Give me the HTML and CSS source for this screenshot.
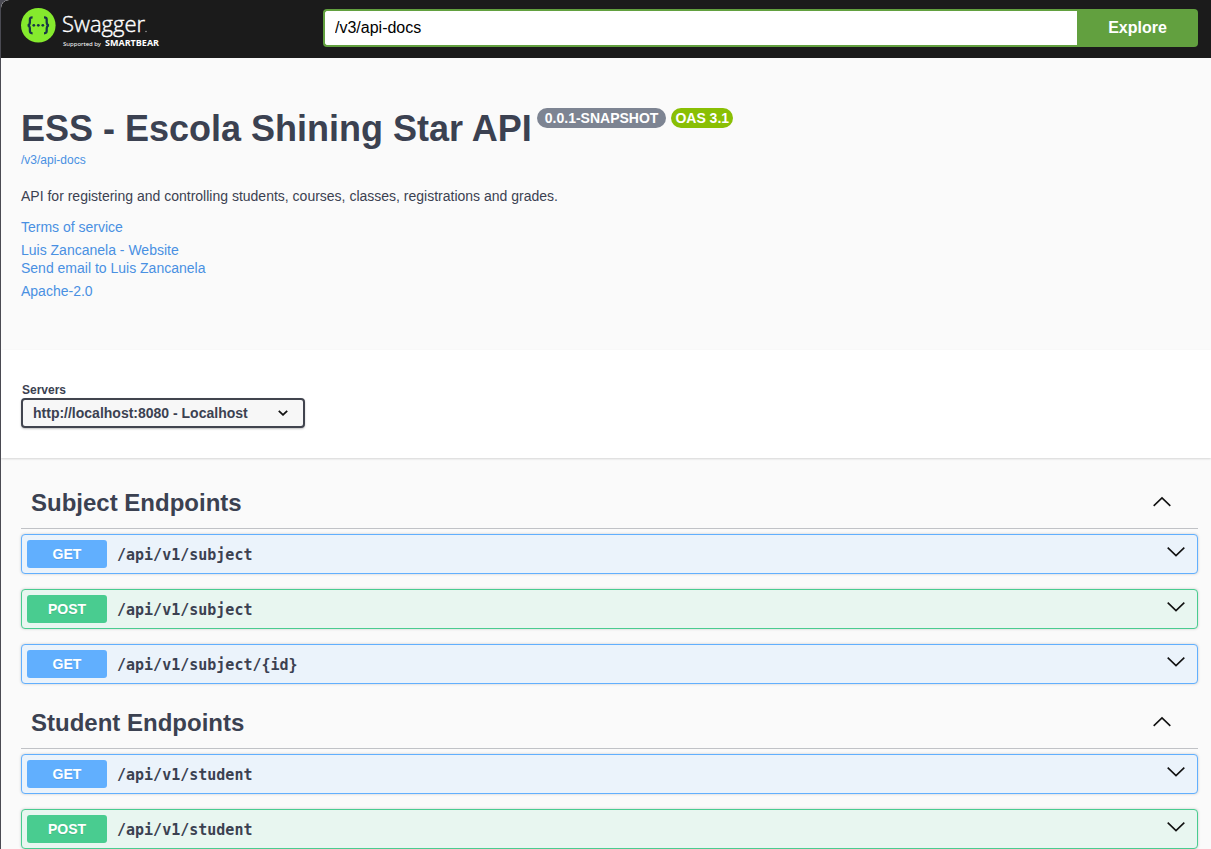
FILE: index.html
```html
<!DOCTYPE html>
<html lang="en">
<head>
<meta charset="utf-8">
<title>Swagger UI</title>
<link rel="stylesheet" href="styles.css">
</head>
<body>
<svg class="sprite" aria-hidden="true">
  <symbol id="up" viewBox="0 0 20 20"><path d="M1.7 12.8 10 4.800l8.3 8"/></symbol>
  <symbol id="down" viewBox="0 0 20 20"><path d="M1.7 3.600 10 11.600l8.3-8"/></symbol>
</svg>
<header class="topbar">
  <a class="logo" href="#" aria-label="Swagger">
    <svg width="144" height="42" viewBox="0 0 144 42">
      <circle cx="17.3" cy="17.3" r="17.3" fill="#85ea2d"/>
      <g fill="none" stroke="#173647" stroke-width="2.300">
        <path d="M11.6 9.3c-2.3 0-2.8.9-2.7 3 .2 2.8-.1 4.7-2.2 5 2.1.3 2.4 2.2 2.2 5-.1 2.1.4 3 2.7 3"/>
        <path d="M23 9.3c2.3 0 2.8.9 2.7 3-.2 2.8.1 4.7 2.2 5-2.1.3-2.4 2.2-2.2 5 .1 2.1-.4 3-2.7 3"/>
      </g>
      <g fill="#173647"><circle cx="12.800" cy="17.3" r="1.400"/><circle cx="17.3" cy="17.3" r="1.400"/><circle cx="21.800" cy="17.3" r="1.400"/></g>
      <text class="logo-name" x="41" y="24">Swagger</text>
      <circle cx="125" cy="23.500" r=".8" fill="#999"/>
      <text class="logo-by" x="42" y="38">Supported by</text>
      <text class="logo-owner" x="84" y="38">SMARTBEAR</text>
    </svg>
  </a>
  <form class="download">
    <input class="download-url" type="text" value="/v3/api-docs" aria-label="API definition URL">
    <button class="download-button" type="button">Explore</button>
  </form>
</header>
<main>
  <section class="info">
    <div class="title-row">
      <h1 class="title">ESS - Escola Shining Star API</h1>
      <span class="badge badge-version">0.0.1-SNAPSHOT</span>
      <span class="badge badge-oas">OAS 3.1</span>
    </div>
    <a class="docs-link" href="#">/v3/api-docs</a>
    <p class="description">API for registering and controlling students, courses, classes, registrations and grades.</p>
    <div class="links">
      <a href="#">Terms of service</a>
      <div class="contact">
        <a href="#">Luis Zancanela - Website</a>
        <a href="#">Send email to Luis Zancanela</a>
      </div>
      <a href="#">Apache-2.0</a>
    </div>
  </section>
  <section class="servers">
    <label class="servers-label" for="servers">Servers</label>
    <div class="select-wrap">
      <select class="servers-select" id="servers"><option>http://localhost:8080 - Localhost</option></select>
      <svg class="select-arrow" width="10" height="6" viewBox="0 0 10 6"><path d="M.8.8 5 4.8 9.200.8"/></svg>
    </div>
  </section>
  <div class="tags">
    <section>
      <h2 class="tag"><span>Subject Endpoints</span>
        <button class="tag-toggle" type="button" aria-label="Collapse Subject Endpoints"><svg class="chevron"><use href="#up"/></svg></button></h2>
      <div class="operations">
        <button class="operation get" type="button"><span class="method">GET</span><span class="path">/api/v1/subject</span><svg class="chevron"><use href="#down"/></svg></button>
        <button class="operation post" type="button"><span class="method">POST</span><span class="path">/api/v1/subject</span><svg class="chevron"><use href="#down"/></svg></button>
        <button class="operation get" type="button"><span class="method">GET</span><span class="path">/api/v1/subject/{id}</span><svg class="chevron"><use href="#down"/></svg></button>
      </div>
    </section>
    <section>
      <h2 class="tag"><span>Student Endpoints</span>
        <button class="tag-toggle" type="button" aria-label="Collapse Student Endpoints"><svg class="chevron"><use href="#up"/></svg></button></h2>
      <div class="operations">
        <button class="operation get" type="button"><span class="method">GET</span><span class="path">/api/v1/student</span><svg class="chevron"><use href="#down"/></svg></button>
        <button class="operation post" type="button"><span class="method">POST</span><span class="path">/api/v1/student</span><svg class="chevron"><use href="#down"/></svg></button>
      </div>
    </section>
  </div>
</main>
</body>
</html>
```
FILE: styles.css
```css
* { box-sizing: border-box; }

html { background: #4a4a52; }

body {
  margin: 0 0 0 1px;
  background: #fafafa;
  color: #3b4151;
  font-family: "Liberation Sans", Arial, sans-serif;
  font-size: 14px;
  line-height: 16px;
  border-top-left-radius: 8px;
}

button, input, select { font: inherit; color: inherit; margin: 0; }
button { cursor: pointer; }
a { color: #4990e2; text-decoration: none; }

.sprite { display: none; }

.topbar {
  display: flex;
  align-items: flex-start;
  gap: 158px;
  padding: 8px 13px 8px 20px;
  background: #1b1b1b;
  border-top-left-radius: 8px;
}
.logo { flex: none; height: 42px; }
.logo svg { display: block; }
.logo-name { font: 300 22px "Open Sans", "Noto Sans", sans-serif; fill: #fff; stroke: #fff; stroke-width: .4px; }
.logo-by { font: 6px "Noto Sans", sans-serif; fill: #fff; }
.logo-owner { font: 700 9px "Open Sans", "Noto Sans", sans-serif; fill: #fff; }

.download { display: flex; flex: 1; margin-top: 1px; }
.download-url {
  flex: 1;
  min-width: 0;
  height: 38px;
  padding: 0 10px;
  border: 2px solid #62a03f;
  border-right: 0;
  border-radius: 4px 0 0 4px;
  background: #fff;
  color: #000;
  font-size: 16px;
}
.download-button {
  width: 121px;
  height: 38px;
  border: 0;
  border-radius: 0 4px 4px 0;
  background: #62a03f;
  color: #fff;
  font-size: 16px;
  font-weight: 700;
}

.info { padding: 50px 20px 51px; }
.title-row { display: flex; flex-wrap: wrap; align-items: flex-start; gap: 5px; }
.title { margin: 0; font-size: 36px; line-height: 42px; }
.badge {
  padding: 2px 4px;
  border-radius: 20px;
  color: #fff;
  font-weight: 700;
}
.badge-version { padding: 2px 8px; background: #7d8492; }
.badge-oas { background: #89bf04; }
.docs-link { display: block; margin-top: 3px; font-size: 12px; line-height: 14px; }
.description { margin: 21px 0 15px; }
.links { display: grid; gap: 7px; justify-items: start; }
.contact { display: grid; gap: 2px; justify-items: start; }

.servers {
  display: flex;
  flex-direction: column;
  align-items: flex-start;
  padding: 33px 20px 30px;
  background: #fff;
  box-shadow: 0 1px 2px rgba(0, 0, 0, .15);
}
.servers-label { margin: 0 1px 1px; font-size: 12px; line-height: 14px; font-weight: 700; }
.select-wrap { position: relative; }
.servers-select {
  display: block;
  width: 284px;
  height: 30px;
  padding: 0 40px 0 10px;
  appearance: none;
  border: 2px solid #41444e;
  border-radius: 4px;
  background: #f7f7f7;
  box-shadow: 0 1px 2px rgba(0, 0, 0, .25);
  font-weight: 700;
}
.select-arrow {
  position: absolute;
  top: 12px;
  right: 17px;
  fill: none;
  stroke: #111;
  stroke-width: 1.8;
  pointer-events: none;
}

.tags { padding: 6px 13px 20px 20px; }
.tag {
  display: flex;
  justify-content: space-between;
  align-items: center;
  margin: 0 0 5px;
  padding: 25px 26px 11px 10px;
  border-bottom: 1px solid #c0c2c6;
  font-size: 24px;
  line-height: 28px;
}
.tag-toggle { display: flex; padding: 0; border: 0; background: none; }
.chevron {
  flex: none;
  width: 20px;
  height: 20px;
  fill: none;
  stroke: #111;
  stroke-width: 1.6;
}

.operations { display: grid; gap: 15px; }
.operation {
  display: flex;
  align-items: center;
  gap: 10px;
  width: 100%;
  padding: 5px 11px 5px 5px;
  border: 1px solid;
  border-radius: 4px;
  box-shadow: 0 0 3px rgba(0, 0, 0, .19);
  text-align: left;
}
.method {
  flex: none;
  width: 80px;
  padding: 6px 0;
  border-radius: 3px;
  color: #fff;
  font-weight: 700;
  text-align: center;
  text-shadow: 0 1px 0 rgba(0, 0, 0, .1);
}
.path {
  flex: 1;
  padding-top: 2px;
  font: 700 15px/18px Consolas, "DejaVu Sans Mono", monospace;
}
.get { border-color: #61affe; background: #ebf3fb; }
.get .method { background: #61affe; }
.post { border-color: #49cc90; background: #e8f6f0; }
.post .method { background: #49cc90; }
```
